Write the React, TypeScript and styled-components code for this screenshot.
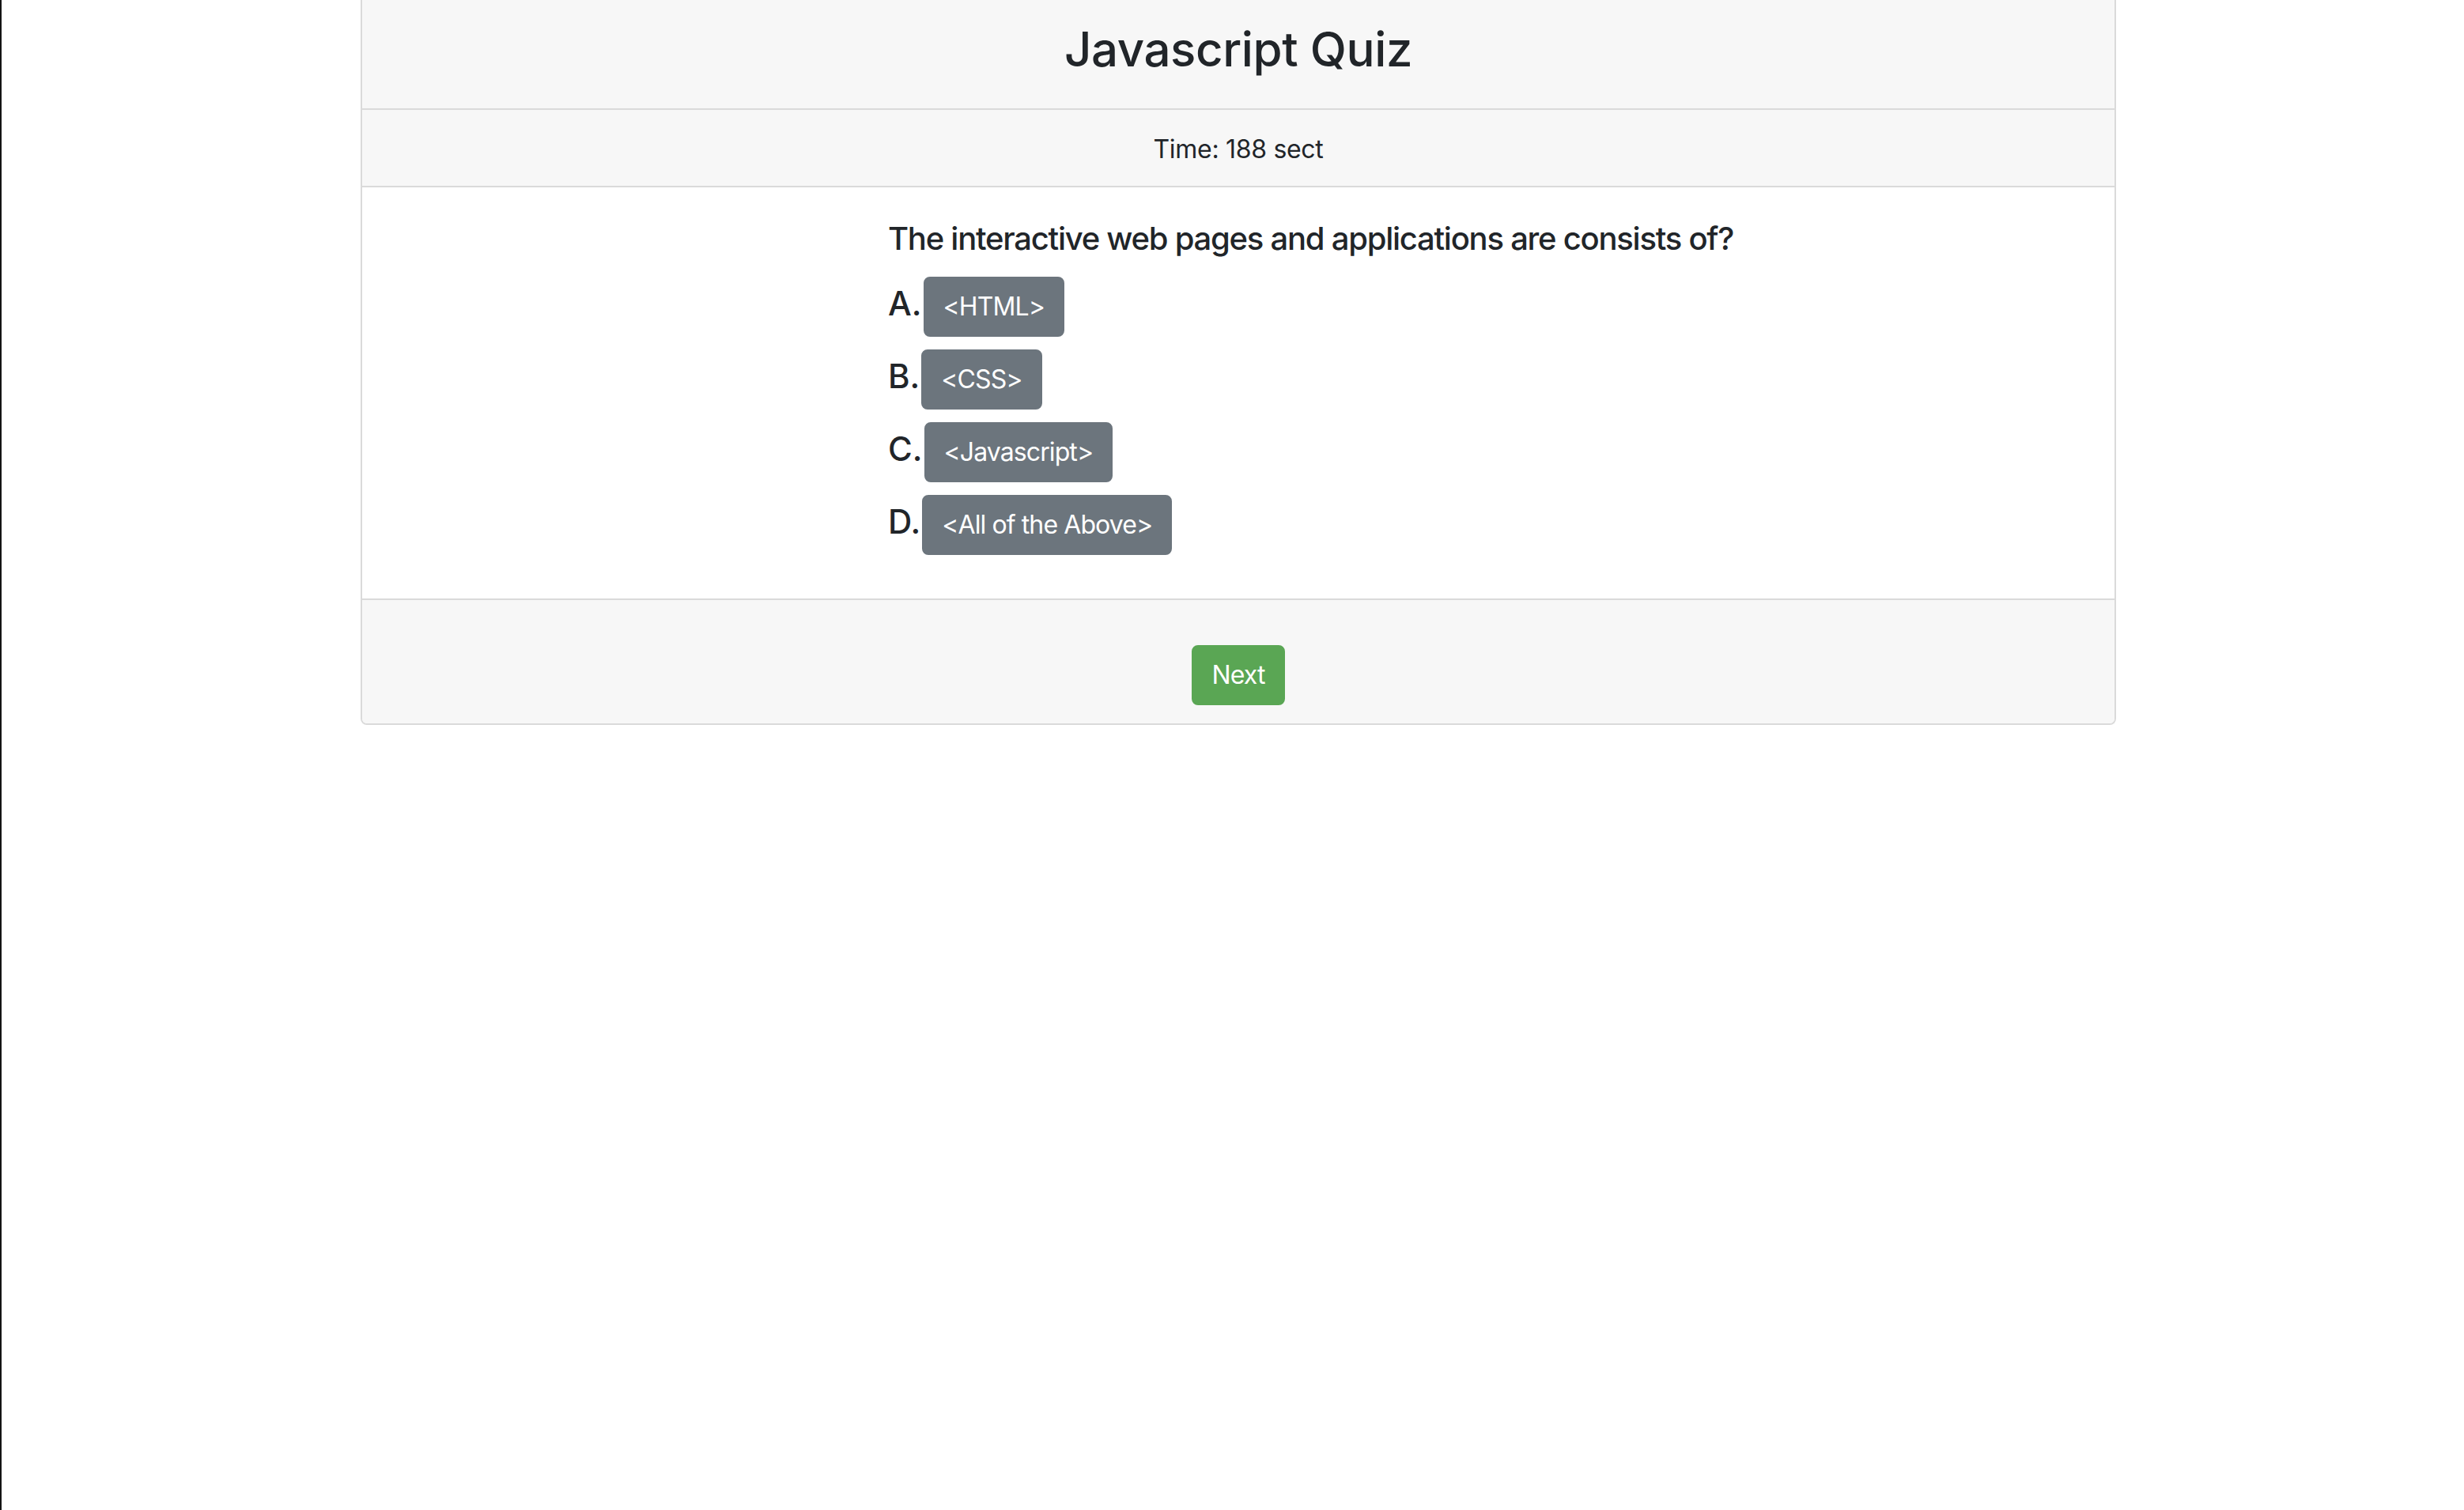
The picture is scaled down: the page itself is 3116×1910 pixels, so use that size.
import React from "react";
import styled, { createGlobalStyle } from "styled-components";

const GlobalStyle = createGlobalStyle`
  html, body {
    margin: 0;
    padding: 0;
    background: #ffffff;
  }
  body {
    font-family: Inter, "Noto Sans", "Liberation Sans", sans-serif;
    color: #212529;
  }
  * { box-sizing: border-box; }
`;

const Page = styled.div`
  min-height: 100vh;
  border-left: 2px solid #141414;
  padding-left: 454px;
`;

const Card = styled.div`
  width: 2220px;
  display: flex;
  flex-direction: column;
  border: 2px solid #dadada;
  border-top: none;
  border-radius: 0 0 8px 8px;
  background: #ffffff;
`;

const Header = styled.div<{ $pt: number; $pb: number }>`
  background: #f7f7f7;
  border-bottom: 2px solid #dadada;
  padding: ${(p) => p.$pt}px 40px ${(p) => p.$pb}px;
  text-align: center;
`;

const Title = styled.h1`
  margin: 0;
  font-size: 60px;
  line-height: 72px;
  font-weight: 500;
  letter-spacing: -0.4px;
  color: #212529;
`;

const Timer = styled.div`
  font-size: 32px;
  line-height: 48px;
  font-weight: 400;
  letter-spacing: -0.3px;
  color: #212529;
`;

const Body = styled.div`
  padding: 41px 40px 55px 665px;
  display: flex;
  flex-direction: column;
`;

const Question = styled.h5`
  margin: 0 0 24px;
  font-size: 40px;
  line-height: 48px;
  font-weight: 500;
  letter-spacing: -1.25px;
  color: #212529;
`;

const Options = styled.div`
  display: flex;
  flex-direction: column;
  gap: 16px;
`;

const OptionRow = styled.div`
  display: flex;
  align-items: baseline;
  gap: 2px;
`;

const Letter = styled.span`
  font-size: 42px;
  line-height: 48px;
  font-weight: 500;
  color: #212529;
`;

const Button = styled.button<{ $variant: "secondary" | "success" }>`
  font-family: inherit;
  font-size: 32px;
  line-height: 48px;
  font-weight: 400;
  letter-spacing: -0.9px;
  color: #ffffff;
  background: ${(p) => (p.$variant === "success" ? "#5aa654" : "#6c757d")};
  border: 2px solid ${(p) => (p.$variant === "success" ? "#5aa654" : "#6c757d")};
  border-radius: 8px;
  padding: 12px 23px;
  cursor: pointer;
`;

const Footer = styled.div`
  background: #f7f7f7;
  border-top: 2px solid #dadada;
  border-radius: 0 0 6px 6px;
  padding: 57px 40px 23px;
  display: flex;
  justify-content: center;
`;

const options = [
  { letter: "A.", text: "<HTML>" },
  { letter: "B.", text: "<CSS>" },
  { letter: "C.", text: "<Javascript>" },
  { letter: "D.", text: "<All of the Above>" },
];

export default function App() {
  return (
    <>
      <GlobalStyle />
      <Page>
        <Card>
          <Header $pt={26} $pb={39}>
            <Title>Javascript Quiz</Title>
          </Header>
          <Header $pt={26} $pb={22}>
            <Timer>Time: 188 sect</Timer>
          </Header>
          <Body>
            <Question>The interactive web pages and applications are consists of?</Question>
            <Options>
              {options.map((o) => (
                <OptionRow key={o.letter}>
                  <Letter>{o.letter}</Letter>
                  <Button $variant="secondary">{o.text}</Button>
                </OptionRow>
              ))}
            </Options>
          </Body>
          <Footer>
            <Button $variant="success">Next</Button>
          </Footer>
        </Card>
      </Page>
    </>
  );
}
